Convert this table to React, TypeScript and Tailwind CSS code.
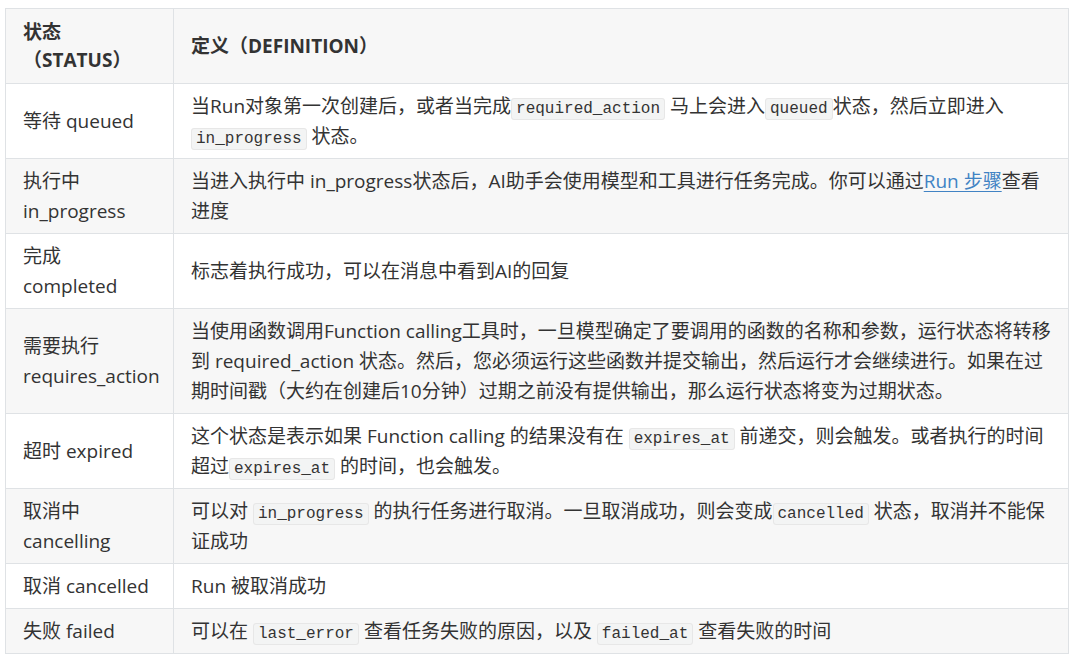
import React from "react";

const C = ({ children }: { children: React.ReactNode }) => (
  <code className="rounded-[3px] border border-[#e7e7e7] bg-[#f3f4f4] px-[4px] py-[1px] font-['Liberation_Mono',monospace] text-[16px] leading-none text-[#333]">
    {children}
  </code>
);

type Row = { s: React.ReactNode; d: React.ReactNode };

const rows: Row[] = [
  {
    s: "等待 queued",
    d: (
      <>
        当Run对象第一次创建后，或者当完成<C>required_action</C> 马上会进入<C>queued</C>状态，然后立即进入{" "}
        <C>in_progress</C> 状态。
      </>
    ),
  },
  {
    s: "执行中 in_progress",
    d: (
      <>
        当进入执行中 in_progress状态后，AI助手会使用模型和工具进行任务完成。你可以通过
        <a className="text-[#4183c4] underline underline-offset-[3px]" href="#">
          Run 步骤
        </a>
        查看进度
      </>
    ),
  },
  { s: "完成 completed", d: "标志着执行成功，可以在消息中看到AI的回复" },
  {
    s: "需要执行 requires_action",
    d: "当使用函数调用Function calling工具时，一旦模型确定了要调用的函数的名称和参数，运行状态将转移到 required_action 状态。然后，您必须运行这些函数并提交输出，然后运行才会继续进行。如果在过期时间戳（大约在创建后10分钟）过期之前没有提供输出，那么运行状态将变为过期状态。",
  },
  {
    s: "超时 expired",
    d: (
      <>
        这个状态是表示如果 Function calling 的结果没有在 <C>expires_at</C> 前递交，则会触发。或者执行的时间超过<C>expires_at</C> 的时间，也会触发。
      </>
    ),
  },
  {
    s: "取消中 cancelling",
    d: (
      <>
        可以对 <C>in_progress</C> 的执行任务进行取消。一旦取消成功，则会变成<C>cancelled</C> 状态，取消并不能保证成功
      </>
    ),
  },
  { s: "取消 cancelled", d: "Run 被取消成功" },
  {
    s: "失败 failed",
    d: (
      <>
        可以在 <C>last_error</C> 查看任务失败的原因，以及 <C>failed_at</C> 查看失败的时间
      </>
    ),
  },
];

export default function App() {
  return (
    <div className="min-h-[659px] bg-white pl-[5px] pt-[8px] font-['Open_Sans','Noto_Sans_CJK_SC',sans-serif] text-[19px] leading-[30px] text-[#333]">
      <table className="w-[1064px] table-fixed border-collapse border border-[#dfe2e5]">
        <colgroup>
          <col className="w-[168px]" />
          <col />
        </colgroup>
        <thead>
          <tr className="bg-[#f7f7f7]">
            <th className="border border-[#dfe2e5] px-[17px] py-[9px] text-left align-middle font-bold leading-[28px]">
              状态（STATUS）
            </th>
            <th className="border border-[#dfe2e5] px-[17px] py-[9px] text-left align-middle font-bold leading-[28px]">
              定义（DEFINITION）
            </th>
          </tr>
        </thead>
        <tbody>
          {rows.map((r, i) => (
            <tr key={i} className={i % 2 === 1 ? "bg-[#f7f7f7]" : "bg-white"}>
              <td className="border border-[#dfe2e5] px-[17px] py-[7px] align-middle">{r.s}</td>
              <td className="border border-[#dfe2e5] px-[17px] py-[7px] align-middle">{r.d}</td>
            </tr>
          ))}
        </tbody>
      </table>
    </div>
  );
}
